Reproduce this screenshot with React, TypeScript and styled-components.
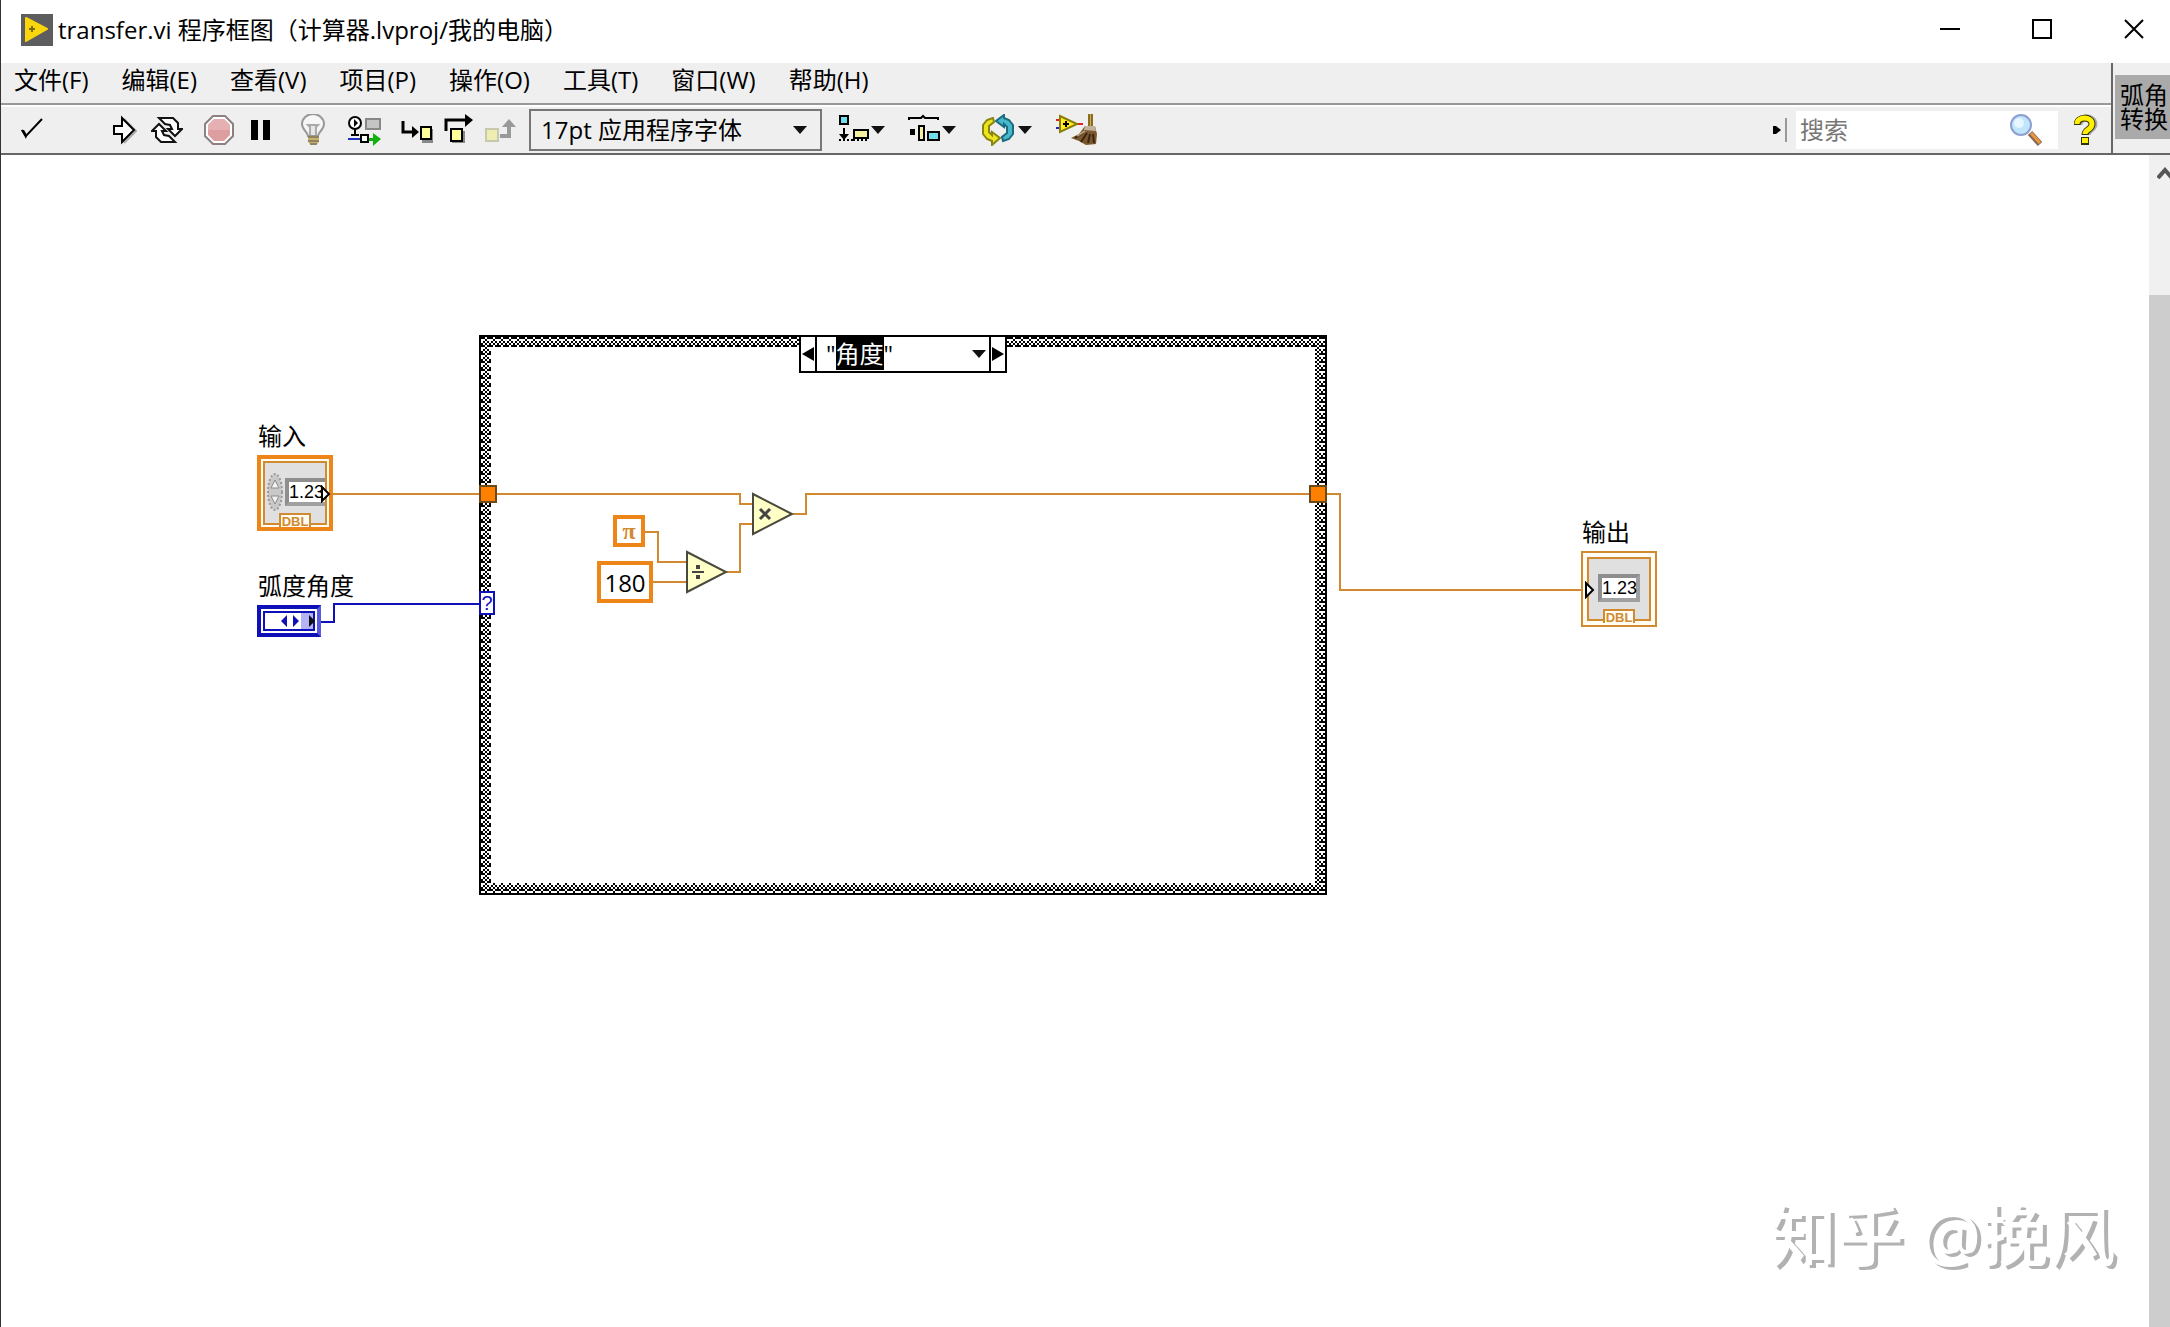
import React from "react";
import styled, { createGlobalStyle } from "styled-components";

const ui = `"Open Sans", "Noto Sans CJK SC", sans-serif`;
const wireOrange = "#d28a30";
const boxOrange = "#ee8518";
const blue = "#1010b8";

const Global = createGlobalStyle`
  *, *::before, *::after { box-sizing: border-box; }
  body { margin: 0; background: #fff; }
  button, input, select { font: inherit; color: inherit; margin: 0; }
  svg { display: block; flex: none; }
`;

const Window = styled.div`
  display: flex;
  flex-direction: column;
  min-height: 100vh;
  border-left: 1px solid #333;
  background: #fff;
  color: #000;
  font: 24px/32px ${ui};
  overflow: hidden;
`;

const TitleBar = styled.header`
  display: flex;
  align-items: stretch;
  justify-content: space-between;
  height: 63px;
  padding-left: 20px;
  overflow: hidden;
`;

const Title = styled.h1`
  display: flex;
  align-items: center;
  gap: 5px;
  margin: 0;
  padding-bottom: 4px;
  font: inherit;
  white-space: nowrap;
`;

const WindowButtons = styled.div`
  display: flex;
  margin-right: -10px;
`;

const PlainButton = styled.button`
  display: flex;
  align-items: center;
  justify-content: center;
  padding: 0;
  border: 0;
  background: none;
`;

const WindowButton = styled(PlainButton)`
  width: 92px;
  padding-bottom: 5px;
`;

const Header = styled.div`
  display: flex;
  background: #efefef;
  border-bottom: 2px solid #666;
`;

const Bars = styled.div`
  flex: 1;
  min-width: 0;
`;

const Menu = styled.nav`
  display: flex;
  gap: 33px;
  height: 42px;
  padding: 0 13px 6px;
  border-bottom: 2px solid #999;
`;

const MenuItem = styled(PlainButton)`
  white-space: nowrap;
`;

const Toolbar = styled.div`
  display: flex;
  align-items: center;
  height: 48px;
  padding-left: 10px;
  border-top: 2px solid #fff;
`;

const ToolGroup = styled.div<{ $before?: number }>`
  display: flex;
  margin-left: ${(p) => p.$before ?? 10}px;
`;

const ToolButton = styled(PlainButton)`
  width: 42px;
  height: 40px;
`;

const FontRing = styled.div`
  position: relative;
  display: flex;
  align-items: center;
  width: 293px;
  height: 42px;
  margin-left: 7px;
`;

const FontSelect = styled.select`
  appearance: none;
  width: 100%;
  height: 100%;
  padding: 0 10px;
  border: 2px solid #777;
  border-radius: 0;
  background: #efefef;
`;

const RingArrow = styled.span`
  position: absolute;
  right: 15px;
  pointer-events: none;
`;

const PullDowns = styled.div`
  display: flex;
  gap: 23px;
  margin-left: 17px;
`;

const PullDown = styled(PlainButton)`
  gap: 2px;
  height: 40px;
`;

const SearchArea = styled.div`
  display: flex;
  align-items: center;
  gap: 4px;
  margin-left: auto;
  padding-right: 13px;
`;

const SearchBox = styled.label`
  display: flex;
  align-items: center;
  width: 262px;
  height: 38px;
  margin: 0 12px 0 5px;
  padding: 0 16px 0 4px;
  background: #fff;
`;

const SearchInput = styled.input`
  flex: 1;
  min-width: 0;
  padding: 0;
  border: 0;
  outline: 0;
  background: none;
  &::placeholder { color: #777; opacity: 1; }
`;

const IconPane = styled.div`
  width: 59px;
  padding: 12px 0 0 2px;
  border-left: 2px solid #666;
`;

const ViIcon = styled.div`
  height: 64px;
  padding: 8px 0 0 5px;
  background: #aaa;
  line-height: 24px;
  white-space: nowrap;
  overflow: hidden;
`;

const Workspace = styled.main`
  display: flex;
  flex: 1;
`;

const Canvas = styled.section`
  position: relative;
  flex: 1;
  min-width: 0;
  overflow: hidden;
`;

const ScrollBar = styled.div`
  display: flex;
  flex-direction: column;
  width: 21px;
  background: #f0f0f0;
`;

const ScrollUp = styled(PlainButton)`
  justify-content: flex-start;
  align-items: flex-start;
  height: 140px;
  padding: 12px 0 0 8px;
  overflow: hidden;
`;

const ScrollThumb = styled.div`
  flex: 1;
  background: #cdcdcd;
`;

const Layer = styled.svg`
  position: absolute;
  left: 0;
  top: 0;
`;

/* Everything on the diagram is placed by its own canvas coordinates. */
const Node = styled.div<{ $x: number; $y: number }>`
  position: absolute;
  left: ${(p) => p.$x}px;
  top: ${(p) => p.$y}px;
`;

const Caption = styled(Node)`
  white-space: nowrap;
`;

const TerminalBox = styled(Node)<{ $control?: boolean }>`
  width: 76px;
  height: 76px;
  padding: ${(p) => (p.$control ? 2 : 4)}px;
  border: ${(p) => (p.$control ? `4px solid ${boxOrange}` : `2px solid ${wireOrange}`)};
  background: #fffdf4;
`;

const TerminalFace = styled.div<{ $control?: boolean }>`
  position: relative;
  display: flex;
  align-items: center;
  justify-content: ${(p) => (p.$control ? "flex-end" : "center")};
  height: 64px;
  padding-bottom: 2px;
  border: 2px solid ${wireOrange};
  background: #e1e0e0;
`;

const Digits = styled.span<{ $control?: boolean }>`
  width: ${(p) => (p.$control ? 40 : 42)}px;
  height: 28px;
  border: 4px solid #a0a0a0;
  border-top-color: #8e8e8e;
  border-left-color: #8e8e8e;
  border-right-width: ${(p) => (p.$control ? 0 : 4)}px;
  background: #fff;
  font: 18px/20px "Liberation Sans Narrow", "Liberation Sans", sans-serif;
  text-align: ${(p) => (p.$control ? "left" : "center")};
  white-space: nowrap;
`;

const TypeTag = styled.span`
  position: absolute;
  left: 14px;
  bottom: -4px;
  width: 32px;
  height: 14px;
  border: 2px solid ${wireOrange};
  border-bottom: 0;
  background: #fffdf4;
  color: ${wireOrange};
  font: bold 13px/14px "Liberation Sans", sans-serif;
  text-align: center;
`;

const Knob = styled.svg`
  position: absolute;
  left: 1px;
  top: 10px;
`;

const Port = styled.svg<{ $control?: boolean }>`
  position: absolute;
  top: 22px;
  left: ${(p) => (p.$control ? 56 : -4)}px;
`;

const EnumBox = styled.button`
  display: flex;
  width: 64px;
  height: 32px;
  padding: 2px;
  border: 4px solid ${blue};
  border-right-color: #5a5ae0;
  background: #fff;
`;

const Constant = styled.input<{ $w: number; $h: number; $ink: string; $symbol?: boolean }>`
  display: block;
  width: ${(p) => p.$w}px;
  height: ${(p) => p.$h}px;
  padding: 0;
  border: 4px solid ${boxOrange};
  border-radius: 0;
  background: #fff;
  color: ${(p) => p.$ink};
  font-family: ${(p) => (p.$symbol ? `"Liberation Serif", serif` : ui)};
  font-weight: ${(p) => (p.$symbol ? "bold" : "normal")};
  text-align: center;
`;

const Tunnel = styled(Node)`
  width: 18px;
  height: 18px;
  border: 2px solid #6b4a1c;
  background: #ff8000;
`;

const SelectorTerminal = styled(Node)`
  width: 16px;
  height: 24px;
  border: 2px solid ${blue};
  background: #fff;
  color: ${blue};
  font: 20px/20px "Liberation Sans", sans-serif;
  text-align: center;
`;

const CaseLabel = styled(Node)`
  display: flex;
  width: 208px;
  height: 38px;
  border: 2px solid #000;
  background: #fff;
`;

const CaseStep = styled(PlainButton)`
  width: 14px;
`;

const CaseName = styled.button`
  display: flex;
  align-items: center;
  flex: 1;
  padding: 0 3px 0 9px;
  border: solid #000;
  border-width: 0 2px;
  background: none;
  line-height: 34px;
  svg { margin-left: auto; }
`;

const Selected = styled.span`
  background: #000;
  color: #fff;
`;

const Watermark = styled.div`
  position: absolute;
  right: 34px;
  bottom: 44px;
  color: #fff;
  font: 500 67px/96px ${ui};
  text-shadow: 4px 3px 0 #b2b2b2;
  white-space: nowrap;
`;

const Down = () => (
  <svg width="14" height="8" aria-hidden="true"><path d="M0 0h14L7 8z" fill="#111" /></svg>
);

const icons = {
  check: (
    <svg width="24" height="32"><path d="M2 16l4 6L22 5" fill="none" stroke="#000" strokeWidth="2" /><path d="M1 16h3l3 5-1 4z" /></svg>
  ),
  run: (
    <svg width="24" height="32"><path d="M11 5l12 12-12 12" fill="none" stroke="#aaa" strokeWidth="2" /><path d="M1 12h8V4l12 12L9 28v-8H1z" fill="#fff" stroke="#000" strokeWidth="2" /></svg>
  ),
  loop: (
    <svg width="32" height="32">
      <g fill="#fff" stroke="#111" strokeWidth="2">
        <path d="M8 4h14l5 5v6h4l-7 7-7-7h4l-2-4-5-1z" />
        <path d="M24 28H10l-5-5v-6H1l7-7 7 7h-4l2 4 5 1z" />
      </g>
    </svg>
  ),
  stop: (
    <svg width="30" height="32">
      <path d="M9 2h12l8 8v12l-8 8H9l-8-8V10z" fill="#fff" stroke="#8d8080" strokeWidth="2" />
      <path d="M10 5h10l6 6v10l-6 6H10l-6-6V11z" fill="#dd9ea0" />
      <path d="M10 5h10l6 6v5H4v-5z" fill="#e5b0b2" />
    </svg>
  ),
  pause: (
    <svg width="20" height="32"><path d="M0 6h7v20H0zM12 6h7v20h-7z" /></svg>
  ),
  bulb: (
    <svg width="26" height="32">
      <path d="M8 22c0-4-6-6-6-12a11 10 0 0 1 22 0c0 6-6 8-6 12z" fill="#f6f6f6" stroke="#999" strokeWidth="2" />
      <path d="M10 21v-8l-2-2h10l-2 2v8" fill="#e6e6e6" stroke="#aaa" strokeWidth="2" />
      <path d="M8 22h11v6l-3 3h-5l-3-3z" fill="#c9b36a" />
      <path d="M8 23h11M8 27h11M10 30h7" stroke="#555" strokeWidth="1" />
    </svg>
  ),
  retain: (
    <svg width="34" height="32">
      <path d="M18 5h14v10H18z" fill="#c4c4c4" stroke="#888" strokeWidth="2" />
      <circle cx="7" cy="9" r="6" fill="#fff" stroke="#000" strokeWidth="2" />
      <path d="M6 5v8l4-4zM6 15h2v6H6zM3 20h8v2H3z" />
      <path d="M0 25h13" stroke="#2030c0" strokeWidth="2" />
      <path d="M13 21h7v7h-7z" fill="#fff" stroke="#000" strokeWidth="2" />
      <path d="M21 24h4v-5l8 6-8 7v-5h-4z" fill="#12b012" />
    </svg>
  ),
  into: (
    <svg width="32" height="32">
      <path d="M2 7v11h12" fill="none" stroke="#000" strokeWidth="3" /><path d="M11 12l7 6-7 6z" />
      <path d="M21 15h11v14H21z" fill="#888" /><path d="M20 13h10v12H20z" fill="#ffff9c" stroke="#000" strokeWidth="2" />
    </svg>
  ),
  over: (
    <svg width="30" height="32">
      <path d="M2 17V6h20" fill="none" stroke="#000" strokeWidth="3" /><path d="M21 0l8 6-8 7z" />
      <path d="M8 17h13v12H8z" fill="#888" /><path d="M7 15h11v12H7z" fill="#ffff9c" stroke="#000" strokeWidth="2" />
    </svg>
  ),
  out: (
    <svg width="32" height="32">
      <path d="M1 15h12v12H1z" fill="#eeeeb0" stroke="#c8c8b0" strokeWidth="2" />
      <path d="M15 22h9V11" fill="none" stroke="#999" strokeWidth="4" /><path d="M17 13l7-8 7 8z" fill="#999" />
    </svg>
  ),
  align: (
    <svg width="30" height="32">
      <path d="M1 2h8v8H1z" fill="#6fdfee" stroke="#000" strokeWidth="2" />
      <path d="M4 14h2v6h4l-5 6-5-6h4zM0 25h2v2H0zM4 25h2v2H4zM8 25h2v2H8zM12 25h2v2h-2z" />
      <path d="M15 16h14v8H15z" fill="#f5f0a0" stroke="#000" strokeWidth="2" />
      <path d="M14 26h14" stroke="#000" strokeDasharray="2 2" strokeWidth="2" />
    </svg>
  ),
  distribute: (
    <svg width="32" height="32">
      <path d="M1 6V4h12l2-2 2 2h13v2" fill="none" stroke="#000" strokeWidth="2" />
      <path d="M2 15h5v6H2z" />
      <path d="M11 12h5v14h-5z" fill="#f5f0a0" stroke="#000" strokeWidth="2" />
      <path d="M20 18h11v8H20z" fill="#6fdfee" stroke="#000" strokeWidth="2" />
    </svg>
  ),
  reorder: (
    <svg width="37" height="32" viewBox="-3 0 37 32">
      <path d="M11 4L5 6 1 11v9l4 5 5 2v4l8-7-8-6v3l-3-3v-6l5-4z" fill="#ece41e" stroke="#8a8412" strokeWidth="2" />
      <path d="M21 27l6-2 4-5v-9l-4-5-5-2V1l-8 6 8 6v-3l3 3v6l-5 4z" fill="#48b8cc" stroke="#1b6c7e" strokeWidth="2" />
    </svg>
  ),
  clean: (
    <svg width="44" height="32">
      <path d="M1 6h4" stroke="#d22" strokeWidth="2" /><path d="M1 14h4" stroke="#22c" strokeWidth="2" /><path d="M22 10h6" stroke="#d22" strokeWidth="2" />
      <path d="M5 2l17 8-17 8z" fill="#ffee20" stroke="#8a7d0a" strokeWidth="2" />
      <path d="M8 10h6M11 7v6" stroke="#000" strokeWidth="2" />
      <path d="M33 0h5v14h-5z" fill="#8a6d1e" /><path d="M35 0h1v14h-1z" fill="#c8ac55" />
      <path d="M30 12h10l2 8-1 10-10 1-7-4-8-3 8-4z" fill="#7a5730" /><path d="M30 12h10l1 5-12-1z" fill="#c2b49c" />
      <path d="M20 24l9-6M26 28l6-9M33 29l2-9M39 29l-1-9" stroke="#3c250e" strokeWidth="2" />
      <path d="M22 22l8-5" stroke="#b8a27c" strokeWidth="2" />
    </svg>
  ),
};

const menu = ["文件(F)", "编辑(E)", "查看(V)", "项目(P)", "操作(O)", "工具(T)", "窗口(W)", "帮助(H)"];

type IconName = keyof typeof icons;

const groups: { before?: number; tools: [IconName, string][] }[] = [
  { before: 0, tools: [["check", "语法检查"]] },
  { before: 51, tools: [["run", "运行"], ["loop", "连续运行"]] },
  { tools: [["stop", "中止执行"], ["pause", "暂停"]] },
  { tools: [["bulb", "高亮显示执行过程"]] },
  { tools: [["retain", "保存连线值"]] },
  { tools: [["into", "单步步入"], ["over", "单步步过"], ["out", "单步步出"]] },
];

const pullDowns: [IconName, string][] = [["align", "对齐对象"], ["distribute", "分布对象"], ["reorder", "重新排序"]];

/* Woven border of the case structure, one character per 2px cell. */
const weave = ["##.#", "..#.", ".#.#", "#.#."];

function CaseFrame() {
  return (
    <g>
      <defs>
        <pattern id="weave" width="8" height="8" patternUnits="userSpaceOnUse" x="480" y="182">
          {weave.flatMap((row, y) =>
            [...row].map((c, x) => (c === "#" ? <rect key={`${x}-${y}`} x={x * 2} y={y * 2} width="2" height="2" /> : null)),
          )}
        </pattern>
      </defs>
      <path d="M478 180h848v560H478z" fill="#000" />
      <path d="M480 182h844v556H480z" fill="#fff" />
      <path d="M480 182h844v556H480z" fill="url(#weave)" />
      <path d="M490 192h824v536H490z" fill="#fff" />
    </g>
  );
}

function Terminal({ x, y, control }: { x: number; y: number; control?: boolean }) {
  return (
    <TerminalBox $x={x} $y={y} $control={control}>
      <TerminalFace $control={control}>
        {control && (
          <Knob width="18" height="38" aria-hidden="true">
            <ellipse cx="9" cy="19" rx="7" ry="18" fill="#c9c9c9" stroke="#999" strokeWidth="2" strokeDasharray="2 2" />
            <path d="M9 7l4 8H5zM9 31l4-8H5z" fill="#f3f3f3" stroke="#888" />
          </Knob>
        )}
        <Digits $control={control}>1.23</Digits>
        <TypeTag>DBL</TypeTag>
        <Port $control={control} width="10" height="18" aria-hidden="true">
          <path d="M1 2l7 7-7 7z" fill="#fff" stroke="#000" strokeWidth="2" />
        </Port>
      </TerminalFace>
    </TerminalBox>
  );
}

export default function App() {
  return (
    <Window>
      <Global />
      <TitleBar>
        <Title>
          <svg width="32" height="32" aria-hidden="true">
            <path d="M0 0h32v32H0z" fill="#5d5d5f" />
            <path d="M5 4l21 11L5 27z" fill="#fbd60d" stroke="#fbd60d" strokeWidth="2" strokeLinejoin="round" />
            <path d="M8 15h6M11 12v6" stroke="#7d6b10" strokeWidth="2" />
          </svg>
          transfer.vi 程序框图（计算器.lvproj/我的电脑）
        </Title>
        <WindowButtons>
          <WindowButton aria-label="最小化"><svg width="20" height="20"><path d="M0 9h20v2H0z" /></svg></WindowButton>
          <WindowButton aria-label="最大化"><svg width="20" height="20"><path d="M1 1h18v18H1z" fill="none" stroke="#000" strokeWidth="2" /></svg></WindowButton>
          <WindowButton aria-label="关闭"><svg width="20" height="20"><path d="M1 1l18 18M19 1L1 19" stroke="#000" strokeWidth="2" /></svg></WindowButton>
        </WindowButtons>
      </TitleBar>

      <Header>
        <Bars>
          <Menu>
            {menu.map((m) => <MenuItem key={m}>{m}</MenuItem>)}
          </Menu>
          <Toolbar>
            {groups.map((g, i) => (
              <ToolGroup key={i} $before={g.before}>
                {g.tools.map(([icon, name]) => <ToolButton key={icon} aria-label={name}>{icons[icon]}</ToolButton>)}
              </ToolGroup>
            ))}
            <FontRing>
              <FontSelect aria-label="文本设置"><option>17pt 应用程序字体</option></FontSelect>
              <RingArrow><Down /></RingArrow>
            </FontRing>
            <PullDowns>
              {pullDowns.map(([icon, name]) => <PullDown key={icon} aria-label={name}>{icons[icon]}<Down /></PullDown>)}
              <PullDown aria-label="整理程序框图">{icons.clean}</PullDown>
            </PullDowns>
            <SearchArea>
              <svg width="8" height="8" aria-hidden="true"><path d="M0 0h3l5 4-5 4H0z" /></svg>
              <svg width="2" height="24" aria-hidden="true"><path d="M0 0h2v24H0z" fill="#999" /></svg>
              <SearchBox>
                <SearchInput aria-label="搜索" placeholder="搜索" />
                <svg width="32" height="32" aria-hidden="true">
                  <path d="M20 19l10 11" stroke="#8a6a5c" strokeWidth="6" />
                  <path d="M21 19l9 10" stroke="#e79a3c" strokeWidth="3" />
                  <circle cx="11" cy="11" r="10" fill="#bfe6fb" stroke="#8f9fd0" strokeWidth="2" />
                  <circle cx="9" cy="9" r="5" fill="#e6f7ff" />
                </svg>
              </SearchBox>
              <PlainButton aria-label="显示即时帮助">
                <svg width="24" height="32">
                  <path d="M5 11c0-9 15-9 15-1 0 6-7 5-7 11" fill="none" stroke="#aaa" strokeWidth="7" />
                  <path d="M3 11c0-9 15-9 15-1 0 6-7 5-7 11" fill="none" stroke="#33330a" strokeWidth="7" />
                  <path d="M7 23h8v8H7z" fill="#33330a" />
                  <path d="M3 10c0-8 15-8 15 0 0 6-7 5-7 10" fill="none" stroke="#fff100" strokeWidth="5" />
                  <path d="M8 24h6v5H8z" fill="#fff100" />
                </svg>
              </PlainButton>
            </SearchArea>
          </Toolbar>
        </Bars>
        <IconPane>
          <ViIcon>弧角<br />转换</ViIcon>
        </IconPane>
      </Header>

      <Workspace>
        <Canvas>
          <Layer width="1700" height="760" shapeRendering="crispEdges" aria-hidden="true">
            <CaseFrame />
            <g fill="none" stroke={wireOrange} strokeWidth="2">
              <path d="M332 339h407v10h12" />
              <path d="M792 359h13v-20h534v96h241" />
              <path d="M644 377h13v30h28M652 427h33" />
              <path d="M726 417h13v-48h12" />
            </g>
            <path d="M320 467h13v-18h145" fill="none" stroke={blue} strokeWidth="2" />
          </Layer>
          <Layer width="1700" height="760" aria-hidden="true">
            <g fill="#ffffc8" stroke="#4a4a3c" strokeWidth="2">
              <path d="M752 339l39 20-39 20z" />
              <path d="M686 397l39 20-39 20z" />
            </g>
            <path d="M759 354l10 10M769 354l-10 10" stroke="#444" strokeWidth="3" />
            <path d="M691 417h12" stroke="#444" strokeWidth="2" />
            <path d="M695 410h4v4h-4zM695 420h4v4h-4z" fill="#444" />
          </Layer>

          <Caption $x={257} $y={265}>输入</Caption>
          <Terminal x={256} y={300} control />
          <Caption $x={257} $y={415}>弧度角度</Caption>
          <Node $x={256} $y={450}>
            <EnumBox aria-label="弧度角度">
              <svg width="52" height="20" aria-hidden="true">
                <path d="M38 0h14v20H38z" fill="#b4b4f4" />
                <path d="M1 1h50v18H1z" fill="none" stroke={blue} strokeWidth="2" />
                <path d="M24 4v12l-6-6zM30 4v12l6-6z" fill={blue} />
                <path d="M46 4l6 6-6 6z" fill="#111" />
              </svg>
            </EnumBox>
          </Node>

          <CaseLabel $x={798} $y={180}>
            <CaseStep aria-label="上一分支"><svg width="12" height="14"><path d="M12 0v14L0 7z" /></svg></CaseStep>
            <CaseName aria-label="分支选择器标签">
              <span>"<Selected>角度</Selected>"</span>
              <Down />
            </CaseName>
            <CaseStep aria-label="下一分支"><svg width="12" height="14"><path d="M0 0v14l12-7z" /></svg></CaseStep>
          </CaseLabel>

          <Tunnel $x={478} $y={330} />
          <Tunnel $x={1308} $y={330} />
          <SelectorTerminal $x={478} $y={436}>?</SelectorTerminal>
          <Node $x={612} $y={360}>
            <Constant $w={32} $h={32} $ink={wireOrange} $symbol aria-label="Pi 常量" defaultValue="π" />
          </Node>
          <Node $x={596} $y={406}>
            <Constant $w={56} $h={42} $ink="#000" aria-label="数值常量" defaultValue="180" />
          </Node>

          <Caption $x={1581} $y={361}>输出</Caption>
          <Terminal x={1580} y={396} />

          <Watermark>知乎 @挽风</Watermark>
        </Canvas>
        <ScrollBar>
          <ScrollUp aria-label="向上滚动">
            <svg width="16" height="12"><path d="M1 11l7-8 7 8" fill="none" stroke="#555" strokeWidth="4" /></svg>
          </ScrollUp>
          <ScrollThumb />
        </ScrollBar>
      </Workspace>
    </Window>
  );
}
